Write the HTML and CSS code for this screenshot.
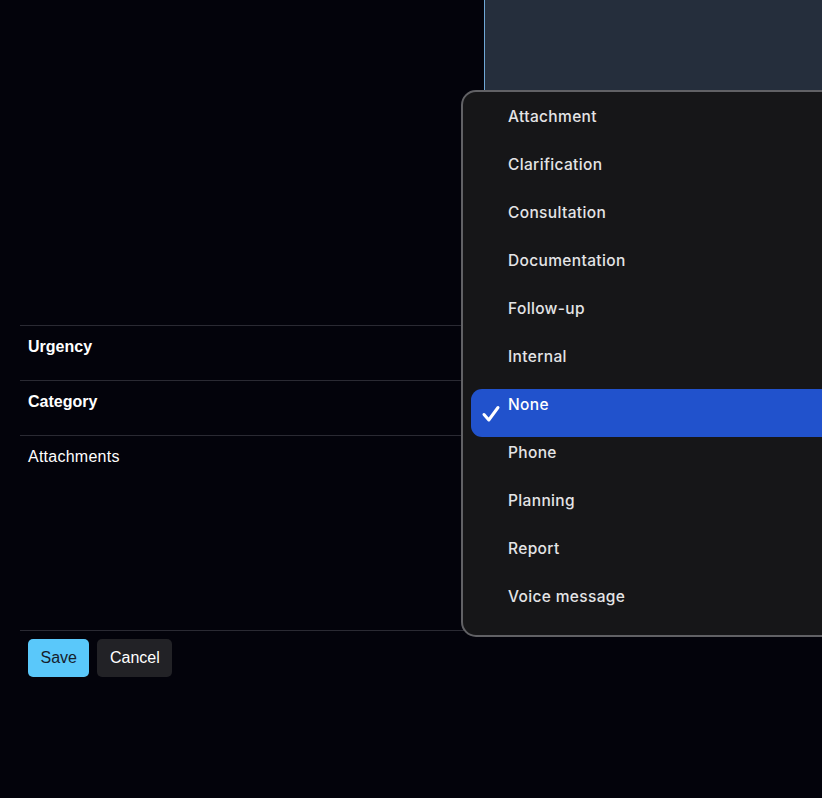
FILE: index.html
```html
<!DOCTYPE html>
<html lang="en">

<head>
  <meta charset="UTF-8">
  <meta name="viewport" content="width=device-width, initial-scale=1.0">
  <title>Edit Note</title>
  <link rel="stylesheet" href="styles.css">
</head>

<body>
  <form class="note-form">
    <div class="top">
      <div class="note-box"></div>
    </div>
    <div class="row"><span class="label strong">Urgency</span></div>
    <div class="row"><span class="label strong">Category</span></div>
    <div class="row tall"><span class="label">Attachments</span></div>
    <div class="actions">
      <button type="button" class="btn save">Save</button>
      <button type="button" class="btn cancel">Cancel</button>
    </div>
  </form>

  <!-- native select popup, open over the form -->
  <ul class="menu">
    <li>Attachment</li>
    <li>Clarification</li>
    <li>Consultation</li>
    <li>Documentation</li>
    <li>Follow-up</li>
    <li>Internal</li>
    <li class="selected">
      <svg class="check" viewBox="0 0 20 20" width="20" height="20">
        <path d="M3 10.5 L7.8 16 L17 3.5" fill="none" stroke="#fff" stroke-width="3" stroke-linecap="round" stroke-linejoin="round" />
      </svg>
      None
    </li>
    <li>Phone</li>
    <li>Planning</li>
    <li>Report</li>
    <li>Voice message</li>
  </ul>
</body>

</html>
```

FILE: styles.css
```css
html,
body {
  margin: 0;
  padding: 0;
  height: 100%;
  overflow: hidden;
}

body {
  background-color: #03030b;
  color: #fff;
  font-family: "Liberation Sans", Arial, sans-serif;
  font-size: 16px;
  position: relative;
}

.note-form {
  margin-left: 20px;
  width: 900px;
}

.top {
  height: 325px;
  display: flex;
}

.note-box {
  margin-left: 464px;
  width: 100%;
  height: 100%;
  background-color: #252e3c;
  border-left: 1px solid #6fa7d6;
}

.row {
  border-top: 1px solid #2a2a33;
  padding: 12px 8px 0;
  box-sizing: border-box;
  height: 55px;
}

.row.tall {
  height: 195px;
}

.label {
  display: block;
  line-height: 18px;
}

.strong {
  font-weight: bold;
}

.label:not(.strong) {
  letter-spacing: 0.25px;
}

.actions {
  border-top: 1px solid #2a2a33;
  padding: 8px 8px 0;
  display: flex;
  gap: 8px;
}

.btn {
  font-family: "Liberation Sans", Arial, sans-serif;
  font-size: 16px;
  height: 38px;
  padding: 0 12.5px;
  border: none;
  border-radius: 5px;
}

.save {
  background-color: #5ac8fa;
  color: #15202b;
}

.cancel {
  background-color: #222226;
  color: #fff;
}

.menu {
  position: absolute;
  left: 461px;
  top: 90px;
  width: 420px;
  margin: 0;
  padding: 1px 8px 14px;
  list-style: none;
  background-color: #161618;
  border: 2px solid #616165;
  border-radius: 15px;
  box-sizing: border-box;
  font-family: Inter, "Liberation Sans", sans-serif;
  font-size: 15.5px;
  font-weight: 500;
  letter-spacing: 0.35px;
  color: #e4e4e6;
}

.menu li {
  height: 48px;
  line-height: 48px;
  padding-left: 37px;
  position: relative;
  box-sizing: border-box;
}

.menu li.selected {
  margin-top: 8px;
  background-color: #2152cc;
  border-radius: 11px;
  color: #fff;
  line-height: 32px;
}

.menu li.selected + li {
  margin-top: -8px;
}

.check {
  position: absolute;
  left: 10px;
  top: 15px;
}
```
